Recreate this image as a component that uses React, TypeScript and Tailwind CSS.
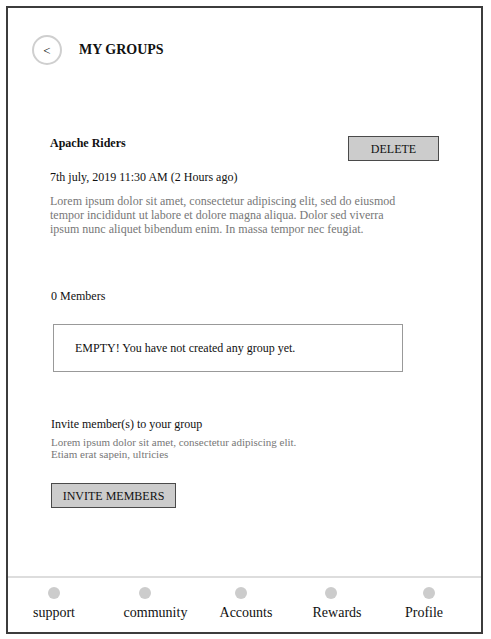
import React from 'react';

const navItems = [
  { label: 'support', width: 'w-[92px]', dot: '' },
  { label: 'community', width: 'w-[111px]', dot: 'mr-[22px]' },
  { label: 'Accounts', width: 'w-[70px]', dot: 'mr-[10px]' },
  { label: 'Rewards', width: 'w-[112px]', dot: 'mr-[12px]' },
  { label: 'Profile', width: 'w-[62px]', dot: 'ml-[10px]' }
];

const App: React.FC = () => {
  return (
    <div className="w-[491px] h-[639px] bg-white pt-[6px] pl-[6px] font-['Liberation_Serif',serif] text-[#111]">
      <div className="w-[477px] h-[628px] border-2 border-[#3c3c3c] flex flex-col">
        {/* Main content */}
        <div className="flex-1 flex flex-col">
          {/* Header */}
          <div className="flex items-center pt-[27px] pl-[24px]">
            <button className="w-[30px] h-[30px] rounded-full border-2 border-[#cfcfcf] flex items-center justify-center text-[13px] leading-none">
              &lt;
            </button>
            <h1 className="ml-[17px] text-[14px] font-bold leading-4">MY GROUPS</h1>
          </div>

          <div className="pl-[42px] pr-[42px] flex flex-col">
            {/* Group title row */}
            <div className="mt-[71px] flex justify-between items-start">
              <div className="text-[12px] font-bold leading-[14px]">Apache Riders</div>
              <button className="w-[91px] h-[25px] bg-[#cccccc] border border-[#4a4a4a] text-[12px] leading-none flex items-center justify-center">
                DELETE
              </button>
            </div>
            <div className="mt-[9px] text-[12px] leading-[14px]">7th july, 2019 11:30 AM (2 Hours ago)</div>
            <p className="mt-[10px] w-[355px] text-[12px] leading-[14px] text-[#777]">
              Lorem ipsum dolor sit amet, consectetur adipiscing elit, sed do eiusmod tempor incididunt ut labore et dolore magna aliqua. Dolor sed viverra ipsum nunc aliquet bibendum enim. In massa tempor nec feugiat.
            </p>

            {/* Members */}
            <div className="mt-[53px] ml-px text-[12px] leading-[14px]">0 Members</div>
            <div className="mt-[21px] ml-[3px] w-[350px] h-[48px] border border-[#999] flex items-center pl-[21px] text-[12px]">
              EMPTY! You have not created any group yet.
            </div>

            {/* Invite */}
            <div className="mt-[45px] ml-px text-[12px] leading-[14px]">Invite member(s) to your group</div>
            <p className="mt-[5px] ml-px text-[11px] leading-[12px] text-[#777]">
              Lorem ipsum dolor sit amet, consectetur adipiscing elit.
              <br />
              Etiam erat sapein, ultricies
            </p>
            <button className="mt-[23px] ml-px w-[125px] h-[25px] bg-[#cccccc] border border-[#4a4a4a] text-[12px] leading-none flex items-center justify-center">
              INVITE MEMBERS
            </button>
          </div>
        </div>

        {/* Bottom nav */}
        <nav className="h-[56px] border-t-2 border-[#dddddd] flex pt-[9px]">
          {navItems.map((item) => (
            <div key={item.label} className={`${item.width} flex flex-col items-center`}>
              <div className={`w-[12px] h-[12px] rounded-full bg-[#cccccc] ${item.dot}`} />
              <span className="mt-[6px] text-[14px] leading-4">{item.label}</span>
            </div>
          ))}
        </nav>
      </div>
    </div>
  );
};

export default App;
